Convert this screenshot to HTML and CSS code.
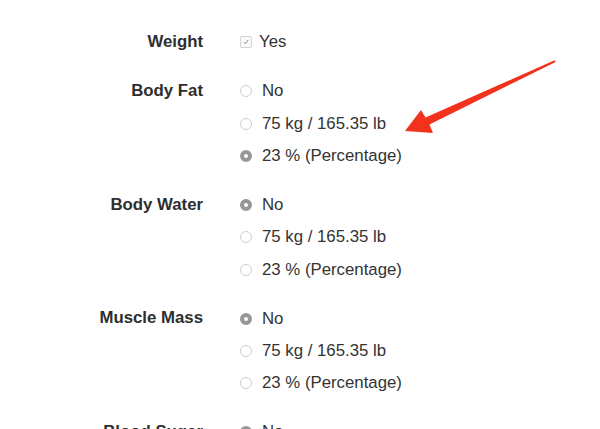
FILE: index.html
```html
<!DOCTYPE html>
<html>
<head>
<meta charset="utf-8">
<link rel="stylesheet" href="styles.css">
</head>
<body>
<div class="page">
  <div class="form">
    <div class="group">
      <div class="label">Weight</div>
      <div class="options">
        <div class="opt"><span class="check"><svg viewBox="0 0 12 12" width="12" height="12"><path d="M3.5 6.3 L5.2 8.2 L8.6 3.6" fill="none" stroke="#8a8a8a" stroke-width="1.2"/></svg></span>Yes</div>
      </div>
    </div>
    <div class="group">
      <div class="label">Body Fat</div>
      <div class="options">
        <div class="opt"><span class="radio"></span>No</div>
        <div class="opt"><span class="radio"></span>75 kg / 165.35 lb</div>
        <div class="opt"><span class="radio on"></span>23 % (Percentage)</div>
      </div>
    </div>
    <div class="group">
      <div class="label">Body Water</div>
      <div class="options">
        <div class="opt"><span class="radio on"></span>No</div>
        <div class="opt"><span class="radio"></span>75 kg / 165.35 lb</div>
        <div class="opt"><span class="radio"></span>23 % (Percentage)</div>
      </div>
    </div>
    <div class="group">
      <div class="label">Muscle Mass</div>
      <div class="options">
        <div class="opt"><span class="radio on"></span>No</div>
        <div class="opt"><span class="radio"></span>75 kg / 165.35 lb</div>
        <div class="opt"><span class="radio"></span>23 % (Percentage)</div>
      </div>
    </div>
    <div class="group">
      <div class="label">Blood Sugar</div>
      <div class="options">
        <div class="opt"><span class="radio on"></span>No</div>
      </div>
    </div>
  </div>
  <svg class="arrow" width="600" height="429" viewBox="0 0 600 429">
    <polygon points="405,131 421,110 425.5,117.5 554.6,60.2 555.6,62 429.5,124.5 433,133" fill="#f2321c"/>
  </svg>
</div>
</body>
</html>
```

FILE: styles.css
```css
html, body {
  margin: 0;
  padding: 0;
  background: #ffffff;
}
.page {
  position: relative;
  width: 600px;
  height: 429px;
  overflow: hidden;
  font-family: "Liberation Sans", Arial, sans-serif;
  font-size: 16.8px;
  color: #333333;
}
.form {
  padding-top: 26px;
  display: flex;
  flex-direction: column;
  gap: 16.8px;
}
.group {
  display: grid;
  grid-template-columns: 203px 1fr;
  column-gap: 37px;
}
.label {
  text-align: right;
  font-weight: bold;
  line-height: 32.3px;
  color: #2e2e2e;
}
.options {
  display: flex;
  flex-direction: column;
}
.opt {
  display: flex;
  align-items: center;
  height: 32.3px;
  white-space: nowrap;
}
.radio {
  box-sizing: border-box;
  width: 12px;
  height: 12px;
  border-radius: 50%;
  border: 1px solid #cfcfcf;
  background: #fff;
  margin-right: 10px;
  margin-top: 0;
  flex: none;
}
.radio.on {
  border: 4px solid #979797;
  background: #ffffff;
}
.check {
  box-sizing: border-box;
  width: 12px;
  height: 12px;
  border-radius: 2px;
  border: 1px solid #d4d4d4;
  background: #fafafa;
  margin-right: 7px;
  margin-top: 0;
  display: flex;
  align-items: center;
  justify-content: center;
  flex: none;
}
.check svg {
  display: block;
}
.arrow {
  position: absolute;
  left: 0;
  top: 0;
  pointer-events: none;
}
```
